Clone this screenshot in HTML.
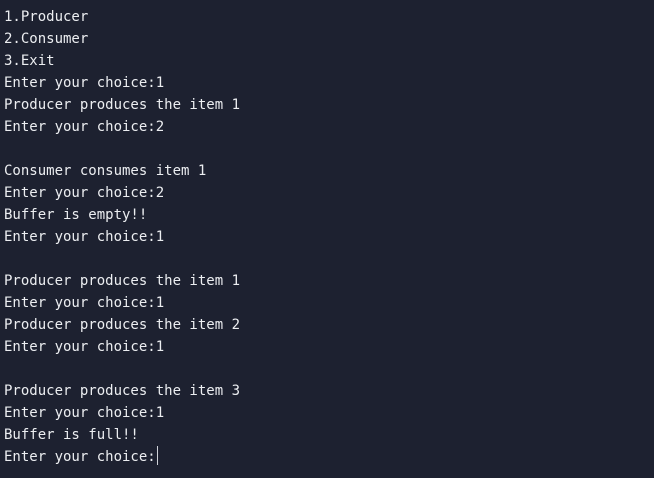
<!DOCTYPE html>
<html><head><meta charset="utf-8"><style>
html,body{margin:0;padding:0;}
body{width:654px;height:478px;background:#1d2130;overflow:hidden;position:relative;}
pre{margin:0;position:absolute;left:4px;top:6px;font-family:"DejaVu Sans Mono",monospace;font-size:14px;line-height:22px;color:#eceef1;}
.cur{display:inline-block;width:1px;height:19px;background:#cfd2d8;vertical-align:-4px;margin-left:1px;}
</style></head><body>
<pre>1.Producer
2.Consumer
3.Exit
Enter your choice:1
Producer produces the item 1
Enter your choice:2

Consumer consumes item 1
Enter your choice:2
Buffer is empty!!
Enter your choice:1

Producer produces the item 1
Enter your choice:1
Producer produces the item 2
Enter your choice:1

Producer produces the item 3
Enter your choice:1
Buffer is full!!
Enter your choice:<span class="cur"></span></pre>
</body></html>
